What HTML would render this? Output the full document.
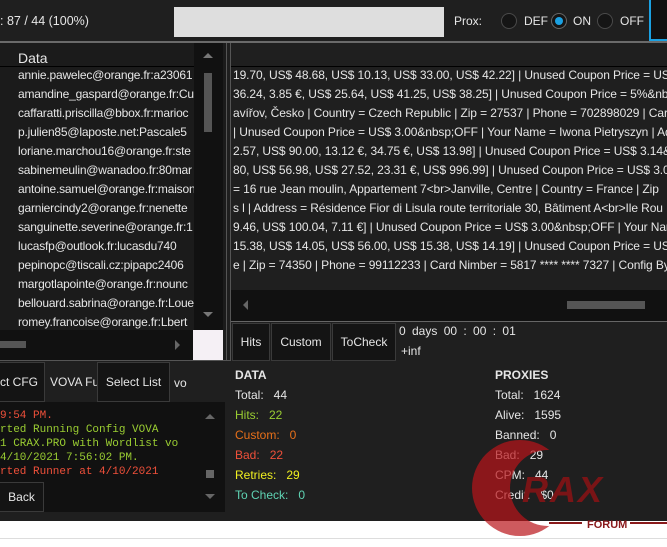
<!DOCTYPE html>
<html><head><meta charset="utf-8"><style>
*{margin:0;padding:0;box-sizing:border-box}
body{width:667px;height:547px;overflow:hidden;background:#fff;font-family:"Liberation Sans",sans-serif;font-size:12px;color:#e6e6e6;position:relative}
.a{position:absolute;white-space:nowrap}
.row{position:absolute;left:18px;white-space:nowrap;overflow:hidden;width:176px;letter-spacing:-0.2px}
.rt{position:absolute;left:233px;white-space:nowrap;overflow:hidden;width:434px;letter-spacing:-0.1px}
.mono{font-family:"Liberation Mono",monospace;font-size:11px}
.btn{position:absolute;background:#141414;border:1px solid #3a3a3a;color:#e6e6e6;text-align:center;white-space:nowrap;overflow:hidden}
.rad{position:absolute;width:16px;height:16px;border:1px solid #4a4a4a;border-radius:50%;top:13px;background:#151515}
</style></head><body>
<div class="a" style="left:0;top:0;width:667px;height:521px;background:#1f1f1f"></div>
<div class="a" style="left:0;top:14px;font-size:12.5px">: 87 / 44 (100%)</div>
<div class="a" style="left:174px;top:7px;width:270px;height:30px;background:#dedede"></div>
<div class="a" style="left:454px;top:14px">Prox:</div>
<div class="rad" style="left:501px"></div><div class="a" style="left:524px;top:14px">DEF</div>
<div class="rad" style="left:551px;border-color:#666"><div style="position:absolute;left:3px;top:3px;width:8px;height:8px;border-radius:50%;background:#1ba1e2"></div></div><div class="a" style="left:573px;top:14px">ON</div>
<div class="rad" style="left:597px"></div><div class="a" style="left:620px;top:14px">OFF</div>
<div class="a" style="left:649px;top:0;width:18px;height:41px;border-left:2px solid #1ba1e2;border-bottom:2px solid #1ba1e2;background:#111"></div>
<div class="a" style="left:0;top:41px;width:667px;height:2px;background:#6a6a6a"></div>
<div class="a" style="left:0;top:43px;width:226px;height:287px;background:#1b1b1b"></div>
<div class="a" style="left:18px;top:50px;font-size:14px">Data</div>
<div class="a" style="left:0;top:66px;width:195px;height:1px;background:#000"></div>
<div class="a" style="left:194px;top:43px;width:29px;height:287px;background:#111"></div>
<div class="a" style="left:203px;top:53px;width:0;height:0;border-left:5px solid transparent;border-right:5px solid transparent;border-bottom:5px solid #777"></div>
<div class="a" style="left:204px;top:73px;width:8px;height:59px;background:#555"></div>
<div class="a" style="left:203px;top:312px;width:0;height:0;border-left:5px solid transparent;border-right:5px solid transparent;border-top:5px solid #777"></div>
<div class="row" style="top:68px">annie.pawelec@orange.fr:a23061</div>
<div class="row" style="top:87px">amandine_gaspard@orange.fr:Cu</div>
<div class="row" style="top:106px">caffaratti.priscilla@bbox.fr:marioc</div>
<div class="row" style="top:125px">p.julien85@laposte.net:Pascale5</div>
<div class="row" style="top:144px">loriane.marchou16@orange.fr:ste</div>
<div class="row" style="top:163px">sabinemeulin@wanadoo.fr:80mar</div>
<div class="row" style="top:182px">antoine.samuel@orange.fr:maison</div>
<div class="row" style="top:201px">garniercindy2@orange.fr:nenette</div>
<div class="row" style="top:220px">sanguinette.severine@orange.fr:1</div>
<div class="row" style="top:239px">lucasfp@outlook.fr:lucasdu740</div>
<div class="row" style="top:258px">pepinopc@tiscali.cz:pipapc2406</div>
<div class="row" style="top:277px">margotlapointe@orange.fr:nounc</div>
<div class="row" style="top:296px">bellouard.sabrina@orange.fr:Loue</div>
<div class="row" style="top:315px;height:14px">romey.francoise@orange.fr:Lbert</div>
<div class="a" style="left:0;top:330px;width:193px;height:30px;background:#111"></div>
<div class="a" style="left:0;top:341px;width:26px;height:7px;background:#555"></div>
<div class="a" style="left:175px;top:340px;width:0;height:0;border-top:5px solid transparent;border-bottom:5px solid transparent;border-left:5px solid #666"></div>
<div class="a" style="left:193px;top:330px;width:30px;height:30px;background:#f5f0f5"></div>
<div class="a" style="left:226px;top:43px;width:1px;height:318px;background:#555"></div>
<div class="a" style="left:230px;top:43px;width:1px;height:318px;background:#555"></div>
<div class="a" style="left:231px;top:43px;width:436px;height:278px;background:#1f1f1f"></div>
<div class="a" style="left:231px;top:66px;width:436px;height:1px;background:#000"></div>
<div class="rt" style="top:68px">19.70, US$ 48.68, US$ 10.13, US$ 33.00, US$ 42.22] | Unused Coupon Price = US$ 5</div>
<div class="rt" style="top:87px">36.24, 3.85 €, US$ 25.64, US$ 41.25, US$ 38.25] | Unused Coupon Price = 5%&amp;nbsp</div>
<div class="rt" style="top:106px">avířov, Česko | Country = Czech Republic | Zip = 27537 | Phone = 702898029 | Card</div>
<div class="rt" style="top:125px">| Unused Coupon Price = US$ 3.00&amp;nbsp;OFF | Your Name = Iwona Pietryszyn | Ad</div>
<div class="rt" style="top:144px"> 2.57, US$ 90.00, 13.12 €, 34.75 €, US$ 13.98] | Unused Coupon Price = US$ 3.14&amp;n</div>
<div class="rt" style="top:163px">80, US$ 56.98, US$ 27.52, 23.31 €, US$ 996.99] | Unused Coupon Price = US$ 3.00&amp;</div>
<div class="rt" style="top:182px"> = 16 rue Jean moulin, Appartement 7&lt;br&gt;Janville, Centre | Country = France | Zip</div>
<div class="rt" style="top:201px">s l | Address = Résidence Fior di Lisula route territoriale 30, Bâtiment A&lt;br&gt;Ile Rou</div>
<div class="rt" style="top:220px">9.46, US$ 100.04, 7.11 €] | Unused Coupon Price = US$ 3.00&amp;nbsp;OFF | Your Name</div>
<div class="rt" style="top:239px">15.38, US$ 14.05, US$ 56.00, US$ 15.38, US$ 14.19] | Unused Coupon Price = US$ 1</div>
<div class="rt" style="top:258px">e | Zip = 74350 | Phone = 99112233 | Card Nimber = 5817 **** **** 7327 | Config By</div>
<div class="a" style="left:231px;top:290px;width:436px;height:31px;background:#111"></div>
<div class="a" style="left:243px;top:300px;width:0;height:0;border-top:5px solid transparent;border-bottom:5px solid transparent;border-right:5px solid #666"></div>
<div class="a" style="left:567px;top:301px;width:78px;height:8px;background:#555"></div>
<div class="a" style="left:231px;top:321px;width:436px;height:1px;background:#666"></div>
<div class="btn" style="left:232px;top:323px;width:38px;height:38px;line-height:36px">Hits</div>
<div class="btn" style="left:271px;top:323px;width:60px;height:38px;line-height:36px">Custom</div>
<div class="btn" style="left:332px;top:323px;width:64px;height:38px;line-height:36px">ToCheck</div>
<div class="a" style="left:399px;top:324px;word-spacing:3px">0 days 00 : 00 : 01</div>
<div class="a" style="left:401px;top:344px">+inf</div>
<div class="a" style="left:0;top:360px;width:231px;height:1px;background:#555"></div>
<div class="btn" style="left:-1px;top:362px;width:46px;height:40px;line-height:38px;text-align:right;padding-right:6px">ct CFG</div>
<div class="a" style="left:50px;top:375px">VOVA Fu</div>
<div class="btn" style="left:97px;top:362px;width:73px;height:40px;line-height:38px">Select List</div>
<div class="a" style="left:174px;top:376px">vo</div>
<div class="a" style="left:0;top:402px;width:225px;height:110px;background:#111"></div>
<div class="a mono" style="left:0;top:410px;color:#f0503a">9:54 PM.</div>
<div class="a mono" style="left:0;top:424px;color:#9acd32">rted Running Config VOVA</div>
<div class="a mono" style="left:0;top:438px;color:#9acd32">1 CRAX.PRO with Wordlist vo</div>
<div class="a mono" style="left:0;top:452px;color:#9acd32">4/10/2021 7:56:02 PM.</div>
<div class="a mono" style="left:0;top:466px;color:#f0503a">rted Runner at 4/10/2021</div>
<div class="a mono" style="left:40px;top:480px;color:#f0503a">.</div>
<div class="a" style="left:205px;top:414px;width:0;height:0;border-left:5px solid transparent;border-right:5px solid transparent;border-bottom:5px solid #666"></div>
<div class="a" style="left:206px;top:470px;width:8px;height:8px;background:#666"></div>
<div class="a" style="left:205px;top:494px;width:0;height:0;border-left:5px solid transparent;border-right:5px solid transparent;border-top:5px solid #666"></div>
<div class="btn" style="left:-1px;top:482px;width:45px;height:30px;line-height:28px">Back</div>
<div class="a" style="left:235px;top:368px;font-weight:bold">DATA</div>
<div class="a" style="left:235px;top:388px">Total:&nbsp;&nbsp; 44</div>
<div class="a" style="left:235px;top:408px;color:#9acd32">Hits:&nbsp;&nbsp; 22</div>
<div class="a" style="left:235px;top:428px;color:#e8701a">Custom:&nbsp;&nbsp; 0</div>
<div class="a" style="left:235px;top:448px;color:#f0503a">Bad:&nbsp;&nbsp; 22</div>
<div class="a" style="left:235px;top:468px;color:#f0f020">Retries:&nbsp;&nbsp; 29</div>
<div class="a" style="left:235px;top:488px;color:#5fd3b3">To Check:&nbsp;&nbsp; 0</div>
<div class="a" style="left:495px;top:368px;font-weight:bold">PROXIES</div>
<div class="a" style="left:495px;top:388px">Total:&nbsp;&nbsp; 1624</div>
<div class="a" style="left:495px;top:408px">Alive:&nbsp;&nbsp; 1595</div>
<div class="a" style="left:495px;top:428px">Banned:&nbsp;&nbsp; 0</div>
<div class="a" style="left:495px;top:448px">Bad:&nbsp;&nbsp; 29</div>
<div class="a" style="left:495px;top:468px">CPM:&nbsp;&nbsp; 44</div>
<div class="a" style="left:495px;top:488px">Credit:&nbsp;&nbsp; $0</div>
<div class="a" style="left:0;top:538px;width:667px;height:1px;background:#ddd"></div>
<svg class="a" style="left:0;top:0" width="667" height="547">
<defs><mask id="m"><rect width="667" height="547" fill="#fff"/><circle cx="548" cy="488" r="38" fill="#000"/></mask></defs>
<circle cx="520" cy="488" r="48" fill="rgba(185,20,25,0.7)" mask="url(#m)"/>
<text x="522" y="502" font-family="Liberation Sans" font-weight="bold" font-style="italic" font-size="36" fill="#7a1416" letter-spacing="2">RAX</text>
<rect x="549" y="522" width="33" height="2" fill="#8a1a1c"/>
<rect x="630" y="522" width="37" height="2" fill="#8a1a1c"/>
<text x="587" y="528" font-family="Liberation Sans" font-weight="bold" font-size="11" fill="#8a1a1c">FORUM</text>
</svg>
</body></html>
